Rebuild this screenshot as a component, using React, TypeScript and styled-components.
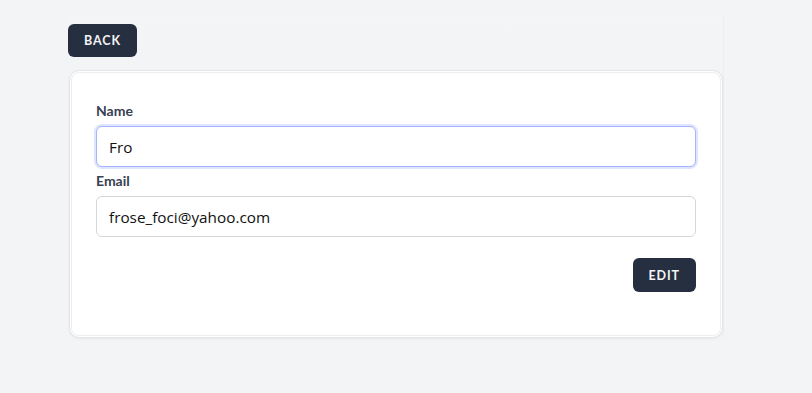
import styled, { createGlobalStyle } from 'styled-components';

const GlobalStyle = createGlobalStyle`
  html, body {
    margin: 0;
    padding: 0;
    background: #f3f4f6;
    font-family: Lato, "Liberation Sans", sans-serif;
  }
`;

function App() {
  return (
    <Page>
      <GlobalStyle />
      <Wrapper>
        <DarkButton type="button">BACK</DarkButton>
        <Card>
          <Field>
            <Label>Name</Label>
            <Input defaultValue="Fro" focused />
          </Field>
          <Field>
            <Label>Email</Label>
            <Input defaultValue="frose_foci@yahoo.com" />
          </Field>
          <Actions>
            <DarkButton type="button" small>
              EDIT
            </DarkButton>
          </Actions>
        </Card>
      </Wrapper>
    </Page>
  );
}

const Page = styled.div`
  min-height: 393px;
  padding: 15px 0 0 68px;
  box-sizing: border-box;
`;

const Wrapper = styled.div`
  width: 656px;
  padding-top: 9px;
  border-right: 1px solid #eceef1;
  box-sizing: border-box;
  background: linear-gradient(to bottom, #f4f5f7, #f3f4f6 60px);
`;

const DarkButton = styled.button<{ small?: boolean }>`
  display: block;
  height: ${(props) => (props.small ? 34 : 33)}px;
  padding: 0 ${(props) => (props.small ? 16 : 16)}px;
  border: none;
  border-radius: 6px;
  background: #252f40;
  color: #f3f4f6;
  font-family: Lato, "Liberation Sans", sans-serif;
  font-size: 12.5px;
  font-weight: 700;
  letter-spacing: 0.9px;
  cursor: pointer;
`;

const Card = styled.div`
  margin: 13px 0 0 1px;
  width: 654px;
  height: 268px;
  box-sizing: border-box;
  padding: 30px 26px 0 26px;
  background: #fff;
  border: 1px solid #e3e5e9;
  border-radius: 10px;
  box-shadow: inset 0 0 0 1px #fff, inset 0 0 0 2px #eceef1,
    0 1px 3px rgba(0, 0, 0, 0.05);
  display: flex;
  flex-direction: column;
`;

const Field = styled.div`
  display: flex;
  flex-direction: column;
  gap: 5px;
  margin-bottom: 4px;
`;

const Label = styled.label`
  font-size: 14px;
  font-weight: 700;
  line-height: 20px;
  color: #374151;
`;

const Input = styled.input<{ focused?: boolean }>`
  width: 600px;
  height: 41px;
  box-sizing: border-box;
  padding: 0 12px;
  border: 1px solid ${(props) => (props.focused ? '#a5b4fc' : '#d3d6db')};
  border-radius: 6px;
  box-shadow: ${(props) => (props.focused ? '0 0 0 2px #dfe5fe' : 'none')};
  font-family: "Open Sans", "Noto Sans", sans-serif;
  font-size: 15.3px;
  color: #111;
  outline: none;
`;

const Actions = styled.div`
  display: flex;
  justify-content: flex-end;
  width: 600px;
  margin-top: 17px;
`;

export default App;
